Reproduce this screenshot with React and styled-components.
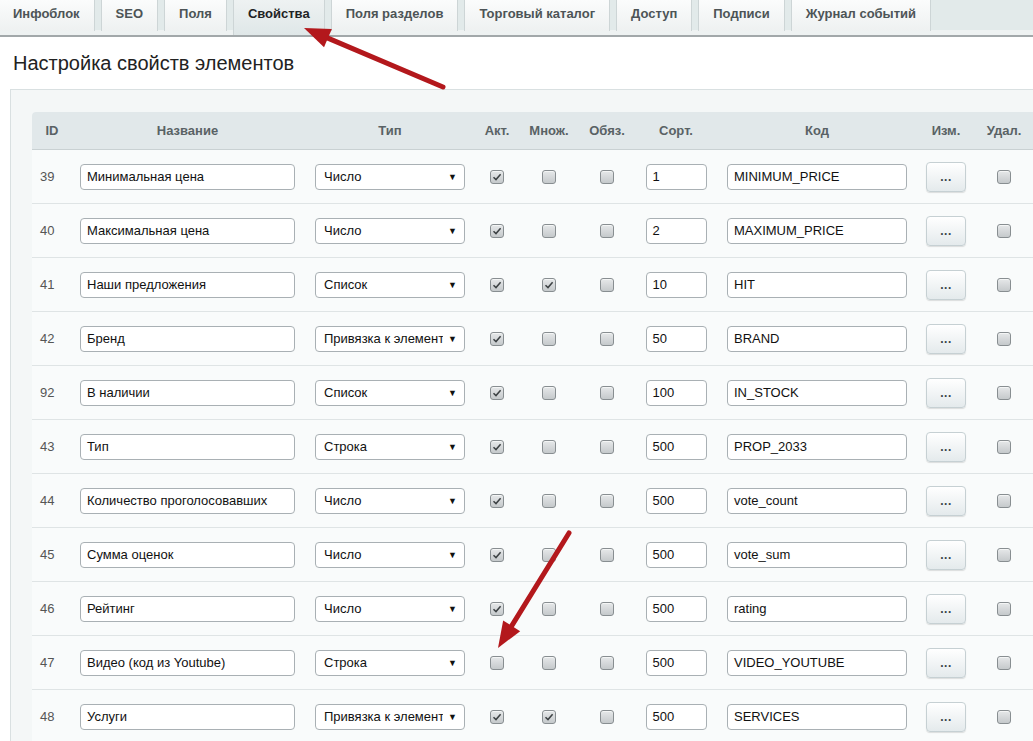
import React from 'react';
import styled, { createGlobalStyle } from 'styled-components';

const GlobalStyle = createGlobalStyle`
  html, body {
    margin: 0;
    padding: 0;
    background: #ffffff;
    overflow: hidden;
  }
  body {
    font-family: 'Liberation Sans', Arial, sans-serif;
    font-size: 13px;
    color: #000;
  }
`;

const Page = styled.div`
  position: relative;
  width: 1100px;
`;

const TabBar = styled.nav`
  display: flex;
  align-items: flex-start;
  height: 35px;
  background: #e2eaea;
  border-bottom: 2px solid #a2a8aa;
  box-shadow: inset 0 -5px 0 #eef2f2;
`;

const Tab = styled.div`
  height: ${(p) => (p.active ? '35px' : '31px')};
  line-height: 28px;
  padding: 0 14px;
  margin-right: 6px;
  font-size: 13px;
  font-weight: bold;
  white-space: nowrap;
  color: ${(p) => (p.active ? '#1f2324' : '#4d5456')};
  background: ${(p) =>
    p.active
      ? 'linear-gradient(#eef2f2, #dfe7e8)'
      : 'linear-gradient(#fbfcfc, #eef1f1)'};
  border-left: 1px solid #cdd5d6;
  border-right: 1px solid #cdd5d6;
  box-sizing: border-box;
  &:first-child {
    border-left: none;
    padding-left: 13px;
  }
`;

const Title = styled.h1`
  margin: 0;
  padding: 15px 13px 15px;
  font-size: 20px;
  font-weight: normal;
  line-height: 22px;
  color: #222;
`;

const Panel = styled.section`
  margin-left: 10px;
  padding: 22px 0 0 21px;
  background: #f4f7f7;
  border-top: 1px solid #d9e0e1;
  border-left: 1px solid #d9e0e1;
`;

const Table = styled.div`
  background: #f9fbfb;
  border-top-left-radius: 4px;
  overflow: hidden;
`;

const cols = '40px 231px 174px 40px 64px 52px 86px 196px 62px 54px 1fr';

const HeadRow = styled.div`
  display: grid;
  grid-template-columns: ${cols};
  align-items: center;
  height: 37px;
  background: #e1e8ea;
  border-bottom: 1px solid #c9d1d3;
`;

const HeadCell = styled.div`
  text-align: center;
  font-size: 13px;
  font-weight: bold;
  color: #596265;
  white-space: nowrap;
`;

const Row = styled.div`
  display: grid;
  grid-template-columns: ${cols};
  align-items: center;
  height: 53px;
  border-bottom: 1px solid #dfe4e5;
`;

const Cell = styled.div`
  display: flex;
  justify-content: ${(p) => (p.left ? 'flex-start' : 'center')};
  align-items: center;
  padding-left: ${(p) => (p.left ? '8px' : '0')};
  color: #555;
`;

const Field = styled.div`
  box-sizing: border-box;
  width: ${(p) => p.w}px;
  height: 26px;
  line-height: 24px;
  padding-left: 6px;
  background: #fff;
  border: 1px solid #a9b0b4;
  border-radius: 4px;
  font-size: 13px;
  color: #111;
  white-space: nowrap;
  overflow: hidden;
`;

const SelectBox = styled.div`
  box-sizing: border-box;
  display: flex;
  align-items: center;
  width: 150px;
  height: 26px;
  padding: 0 7px 0 8px;
  background: #fff;
  border: 1px solid #a9b0b4;
  border-radius: 4px;
  font-size: 13px;
  color: #111;
`;

const SelectValue = styled.span`
  flex: 1;
  min-width: 0;
  overflow: hidden;
  white-space: nowrap;
  text-overflow: clip;
`;

const SelectArrow = styled.span`
  flex: none;
  font-size: 9px;
  color: #111;
  margin-left: 5px;
`;

const Box = styled.span`
  display: inline-flex;
  align-items: center;
  justify-content: center;
  box-sizing: border-box;
  width: 14px;
  height: 14px;
  border: 1px solid #888e91;
  border-radius: 3px;
  background: linear-gradient(#e6e8e9, #c5c9cb);
  box-shadow: inset 0 1px 0 #f4f5f5;
`;

const DotsButton = styled.div`
  box-sizing: border-box;
  width: 40px;
  height: 30px;
  line-height: 28px;
  text-align: center;
  border: 1px solid #c6d0d3;
  border-radius: 4px;
  background: linear-gradient(#ffffff, #e4eaec);
  box-shadow: 0 1px 1px rgba(0, 0, 0, 0.12);
  font-size: 12px;
  font-weight: bold;
  color: #3b4447;
  letter-spacing: 0.5px;
`;

const Overlay = styled.svg`
  position: absolute;
  left: 0;
  top: 0;
  pointer-events: none;
`;

const Checkbox = ({ checked }) => (
  <Box>
    {checked && (
      <svg width="10" height="10" viewBox="0 0 10 10">
        <path d="M1.5 5.2 L4 7.6 L8.6 2.2" fill="none" stroke="#3d4244" strokeWidth="1.5" />
      </svg>
    )}
  </Box>
);

const tabs = [
  'Инфоблок',
  'SEO',
  'Поля',
  'Свойства',
  'Поля разделов',
  'Торговый каталог',
  'Доступ',
  'Подписи',
  'Журнал событий',
];

const headers = ['ID', 'Название', 'Тип', 'Акт.', 'Множ.', 'Обяз.', 'Сорт.', 'Код', 'Изм.', 'Удал.'];

const LINK = 'Привязка к элементам';

const props = [
  { id: 39, name: 'Минимальная цена', type: 'Число', act: true, mult: false, sort: 1, code: 'MINIMUM_PRICE' },
  { id: 40, name: 'Максимальная цена', type: 'Число', act: true, mult: false, sort: 2, code: 'MAXIMUM_PRICE' },
  { id: 41, name: 'Наши предложения', type: 'Список', act: true, mult: true, sort: 10, code: 'HIT' },
  { id: 42, name: 'Бренд', type: LINK, act: true, mult: false, sort: 50, code: 'BRAND' },
  { id: 92, name: 'В наличии', type: 'Список', act: true, mult: false, sort: 100, code: 'IN_STOCK' },
  { id: 43, name: 'Тип', type: 'Строка', act: true, mult: false, sort: 500, code: 'PROP_2033' },
  { id: 44, name: 'Количество проголосовавших', type: 'Число', act: true, mult: false, sort: 500, code: 'vote_count' },
  { id: 45, name: 'Сумма оценок', type: 'Число', act: true, mult: false, sort: 500, code: 'vote_sum' },
  { id: 46, name: 'Рейтинг', type: 'Число', act: true, mult: false, sort: 500, code: 'rating' },
  { id: 47, name: 'Видео (код из Youtube)', type: 'Строка', act: false, mult: false, sort: 500, code: 'VIDEO_YOUTUBE' },
  { id: 48, name: 'Услуги', type: LINK, act: true, mult: true, sort: 500, code: 'SERVICES' },
];

const Arrow = ({ tail, tip }) => {
  const dx = tip[0] - tail[0];
  const dy = tip[1] - tail[1];
  const len = Math.hypot(dx, dy);
  const ux = dx / len;
  const uy = dy / len;
  const nx = -uy;
  const ny = ux;
  const bx = tip[0] - ux * 26;
  const by = tip[1] - uy * 26;
  const head = [
    [tip[0], tip[1]],
    [bx + nx * 10, by + ny * 10],
    [bx - nx * 10, by - ny * 10],
  ]
    .map((p) => p.join(','))
    .join(' ');
  return (
    <g>
      <line x1={tail[0]} y1={tail[1]} x2={bx + ux * 2} y2={by + uy * 2} stroke="#b3181c" strokeWidth="5" strokeLinecap="round" />
      <polygon points={head} fill="#b3181c" />
    </g>
  );
};

const App = () => {
  return (
    <Page>
      <GlobalStyle />
      <TabBar>
        {tabs.map((t) => (
          <Tab key={t} active={t === 'Свойства'}>
            {t}
          </Tab>
        ))}
      </TabBar>
      <Title>Настройка свойств элементов</Title>
      <Panel>
        <Table>
          <HeadRow>
            {headers.map((h) => (
              <HeadCell key={h}>{h}</HeadCell>
            ))}
            <div />
          </HeadRow>
          {props.map((p) => (
            <Row key={p.id}>
              <Cell left>{p.id}</Cell>
              <Cell>
                <Field w={215}>{p.name}</Field>
              </Cell>
              <Cell>
                <SelectBox>
                  <SelectValue>{p.type}</SelectValue>
                  <SelectArrow>▼</SelectArrow>
                </SelectBox>
              </Cell>
              <Cell>
                <Checkbox checked={p.act} />
              </Cell>
              <Cell>
                <Checkbox checked={p.mult} />
              </Cell>
              <Cell>
                <Checkbox />
              </Cell>
              <Cell>
                <Field w={61}>{p.sort}</Field>
              </Cell>
              <Cell>
                <Field w={180}>{p.code}</Field>
              </Cell>
              <Cell>
                <DotsButton>...</DotsButton>
              </Cell>
              <Cell>
                <Checkbox />
              </Cell>
              <div />
            </Row>
          ))}
        </Table>
      </Panel>
      <Overlay width="1033" height="741">
        <Arrow tail={[443, 87]} tip={[304, 28]} />
        <Arrow tail={[569, 533]} tip={[498, 648]} />
      </Overlay>
    </Page>
  );
};

export default App;
